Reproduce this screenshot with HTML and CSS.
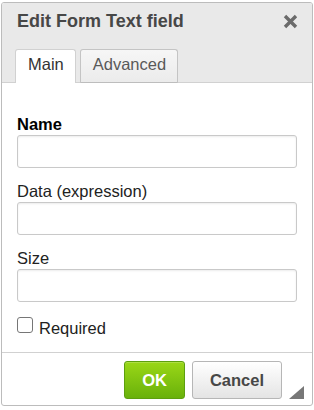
FILE: index.html
```html
<!DOCTYPE html>
<html lang="en">
<head>
    <meta charset="UTF-8">
    <meta name="viewport" content="width=device-width, initial-scale=1.0">
    <title>Edit Form Text field</title>
    <link rel="stylesheet" href="styles.css">
</head>
<body>
    <div class="dialog">
        <div class="dialog-head">
            <div class="title-row">
                <span class="title">Edit Form Text field</span>
                <span class="close" title="Close">
                    <svg width="15" height="15" viewBox="0 0 15 15">
                        <path d="M2 2 L13 13 M13 2 L2 13" stroke="#6b6b6b" stroke-width="3.4" stroke-linecap="butt"/>
                    </svg>
                </span>
            </div>
            <div class="tabs">
                <a class="tab selected">Main</a>
                <a class="tab">Advanced</a>
            </div>
        </div>
        <div class="dialog-body">
            <div class="field">
                <label class="bold">Name</label>
                <input type="text">
            </div>
            <div class="field">
                <label>Data (expression)</label>
                <input type="text">
            </div>
            <div class="field">
                <label>Size</label>
                <input type="text">
            </div>
            <div class="check-row">
                <span class="check-box"></span>
                <span>Required</span>
            </div>
        </div>
        <div class="dialog-footer">
            <button class="btn btn-ok">OK</button>
            <button class="btn btn-cancel">Cancel</button>
            <span class="grip"></span>
        </div>
    </div>
</body>
</html>
```

FILE: styles.css
```css
body {
    margin: 0;
    padding: 0;
    background-color: #fff;
    font-family: "Liberation Sans", Arial, sans-serif;
    font-size: 16.5px;
    color: #222;
}
.dialog {
    margin: 2px 0 0 1px;
    width: 312px;
    height: 404px;
    box-sizing: border-box;
    border: 1px solid #bcbcbc;
    border-radius: 3px;
    background-color: #fff;
    display: flex;
    flex-direction: column;
    overflow: hidden;
}
.dialog-head {
    background-color: #e9e9e9;
    padding: 7px 0 0 13px;
    border-bottom: 1px solid #d1d1d1;
    height: 80px;
    box-sizing: border-box;
    display: flex;
    flex-direction: column;
    justify-content: space-between;
}
.title-row {
    display: flex;
    justify-content: space-between;
    align-items: flex-start;
    padding-right: 14px;
}
.title {
    padding-left: 2px;
    font-size: 18px;
    font-weight: bold;
    line-height: 22px;
    color: #474747;
}
.close {
    margin-top: 4px;
    width: 15px;
    height: 15px;
}
.tabs {
    display: flex;
    gap: 4px;
    margin-bottom: -1px;
}
.tab {
    padding: 5px 11px 9px 12px;
    line-height: 19px;
    height: 34px;
    box-sizing: border-box;
    border: 1px solid #c4c4c4;
    border-bottom: none;
    border-radius: 3px 3px 0 0;
    background: linear-gradient(#f6f6f6, #ebebeb);
    color: #595959;
    box-shadow: inset 0 -1px 0 #bdbdbd;
}
.tab.selected {
    background: #fff;
    color: #333;
    border-color: #d1d1d1;
    box-shadow: none;
}
.dialog-body {
    flex: 1;
    padding: 32px 15px 0;
    border-bottom: 1px solid #d1d1d1;
}
.field {
    margin-bottom: 14px;
}
.field label {
    display: block;
    line-height: 18px;
    margin-bottom: 2px;
    color: #222;
}
.field label.bold {
    font-weight: bold;
    color: #000;
}
.field input {
    display: block;
    width: 100%;
    height: 33px;
    box-sizing: border-box;
    margin: 0;
    border: 1px solid #c9c9c9;
    border-radius: 3px;
    box-shadow: inset 0 1px 2px rgba(0, 0, 0, 0.08);
    background-color: #fff;
}
.check-row {
    display: flex;
    align-items: flex-start;
    gap: 6px;
    padding-top: 3px;
    line-height: 19px;
    color: #222;
}
.check-box {
    width: 16px;
    height: 16px;
    box-sizing: border-box;
    border: 1px solid #767676;
    border-radius: 3px;
    margin-top: -2px;
}
.dialog-footer {
    display: flex;
    justify-content: flex-end;
    align-items: flex-end;
    gap: 7px;
    padding: 8px 8px 6px;
}
.btn {
    height: 38px;
    padding: 0 17px;
    border-radius: 3px;
    font-family: "Liberation Sans", Arial, sans-serif;
    font-size: 16.5px;
    font-weight: bold;
    cursor: pointer;
}
.btn-ok {
    color: #fff;
    border: 1px solid #5d9f0f;
    background: linear-gradient(#9ad717, #69b10b);
    box-shadow: inset 0 1px 0 rgba(255, 255, 255, 0.2);
}
.btn-cancel {
    color: #474747;
    border: 1px solid #b6b6b6;
    background: linear-gradient(#fff, #e4e4e4);
}
.grip {
    width: 0;
    height: 0;
    border-left: 15px solid transparent;
    border-bottom: 13px solid #777;
}
```
